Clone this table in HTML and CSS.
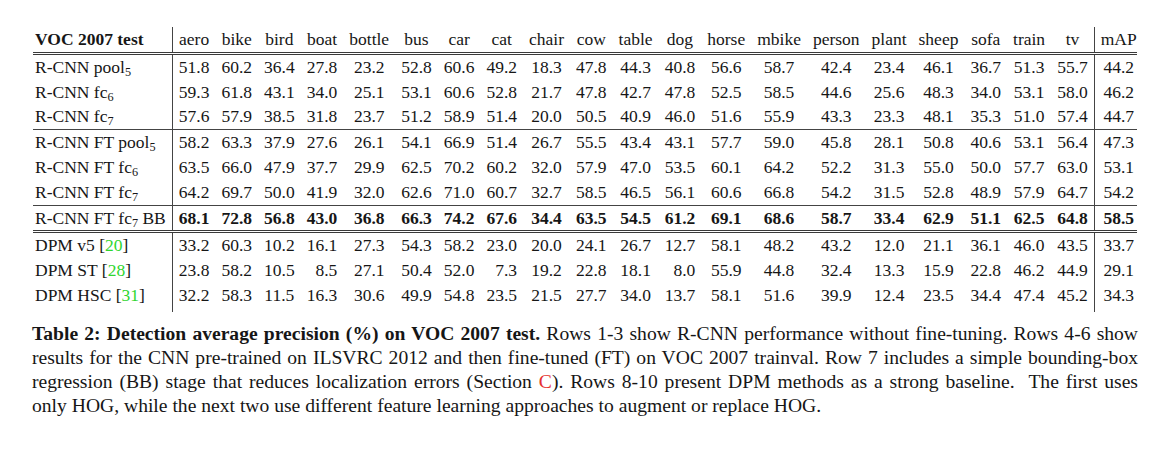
FILE: index.html
```html
<!DOCTYPE html>
<html>
<head>
<meta charset="utf-8">
<link rel="stylesheet" href="styles.css">
</head>
<body>
<div class="page">
<table class="voc">
<thead>
<tr class="dbl"><th class="lbl bold">VOC 2007 test</th><th>aero</th><th>bike</th><th>bird</th><th>boat</th><th>bottle</th><th>bus</th><th>car</th><th>cat</th><th>chair</th><th>cow</th><th>table</th><th>dog</th><th>horse</th><th>mbike</th><th>person</th><th>plant</th><th>sheep</th><th>sofa</th><th>train</th><th>tv</th><th class="map">mAP</th></tr>
</thead>
<tbody>
<tr><td class="lbl">R-CNN pool<sub>5</sub></td><td>51.8</td><td>60.2</td><td>36.4</td><td>27.8</td><td>23.2</td><td>52.8</td><td>60.6</td><td>49.2</td><td>18.3</td><td>47.8</td><td>44.3</td><td>40.8</td><td>56.6</td><td>58.7</td><td>42.4</td><td>23.4</td><td>46.1</td><td>36.7</td><td>51.3</td><td>55.7</td><td class="map">44.2</td></tr>
<tr><td class="lbl">R-CNN fc<sub>6</sub></td><td>59.3</td><td>61.8</td><td>43.1</td><td>34.0</td><td>25.1</td><td>53.1</td><td>60.6</td><td>52.8</td><td>21.7</td><td>47.8</td><td>42.7</td><td>47.8</td><td>52.5</td><td>58.5</td><td>44.6</td><td>25.6</td><td>48.3</td><td>34.0</td><td>53.1</td><td>58.0</td><td class="map">46.2</td></tr>
<tr class="sgl"><td class="lbl">R-CNN fc<sub>7</sub></td><td>57.6</td><td>57.9</td><td>38.5</td><td>31.8</td><td>23.7</td><td>51.2</td><td>58.9</td><td>51.4</td><td>20.0</td><td>50.5</td><td>40.9</td><td>46.0</td><td>51.6</td><td>55.9</td><td>43.3</td><td>23.3</td><td>48.1</td><td>35.3</td><td>51.0</td><td>57.4</td><td class="map">44.7</td></tr>
<tr><td class="lbl">R-CNN FT pool<sub>5</sub></td><td>58.2</td><td>63.3</td><td>37.9</td><td>27.6</td><td>26.1</td><td>54.1</td><td>66.9</td><td>51.4</td><td>26.7</td><td>55.5</td><td>43.4</td><td>43.1</td><td>57.7</td><td>59.0</td><td>45.8</td><td>28.1</td><td>50.8</td><td>40.6</td><td>53.1</td><td>56.4</td><td class="map">47.3</td></tr>
<tr><td class="lbl">R-CNN FT fc<sub>6</sub></td><td>63.5</td><td>66.0</td><td>47.9</td><td>37.7</td><td>29.9</td><td>62.5</td><td>70.2</td><td>60.2</td><td>32.0</td><td>57.9</td><td>47.0</td><td>53.5</td><td>60.1</td><td>64.2</td><td>52.2</td><td>31.3</td><td>55.0</td><td>50.0</td><td>57.7</td><td>63.0</td><td class="map">53.1</td></tr>
<tr class="sgl"><td class="lbl">R-CNN FT fc<sub>7</sub></td><td>64.2</td><td>69.7</td><td>50.0</td><td>41.9</td><td>32.0</td><td>62.6</td><td>71.0</td><td>60.7</td><td>32.7</td><td>58.5</td><td>46.5</td><td>56.1</td><td>60.6</td><td>66.8</td><td>54.2</td><td>31.5</td><td>52.8</td><td>48.9</td><td>57.9</td><td>64.7</td><td class="map">54.2</td></tr>
<tr class="dbl best"><td class="lbl">R-CNN FT fc<sub>7</sub> BB</td><td>68.1</td><td>72.8</td><td>56.8</td><td>43.0</td><td>36.8</td><td>66.3</td><td>74.2</td><td>67.6</td><td>34.4</td><td>63.5</td><td>54.5</td><td>61.2</td><td>69.1</td><td>68.6</td><td>58.7</td><td>33.4</td><td>62.9</td><td>51.1</td><td>62.5</td><td>64.8</td><td class="map">58.5</td></tr>
<tr><td class="lbl">DPM v5 [<span class="cite">20</span>]</td><td>33.2</td><td>60.3</td><td>10.2</td><td>16.1</td><td>27.3</td><td>54.3</td><td>58.2</td><td>23.0</td><td>20.0</td><td>24.1</td><td>26.7</td><td>12.7</td><td>58.1</td><td>48.2</td><td>43.2</td><td>12.0</td><td>21.1</td><td>36.1</td><td>46.0</td><td>43.5</td><td class="map">33.7</td></tr>
<tr><td class="lbl">DPM ST [<span class="cite">28</span>]</td><td>23.8</td><td>58.2</td><td>10.5</td><td><span class="ph">0</span>8.5</td><td>27.1</td><td>50.4</td><td>52.0</td><td><span class="ph">0</span>7.3</td><td>19.2</td><td>22.8</td><td>18.1</td><td><span class="ph">0</span>8.0</td><td>55.9</td><td>44.8</td><td>32.4</td><td>13.3</td><td>15.9</td><td>22.8</td><td>46.2</td><td>44.9</td><td class="map">29.1</td></tr>
<tr class="last"><td class="lbl">DPM HSC [<span class="cite">31</span>]</td><td>32.2</td><td>58.3</td><td>11.5</td><td>16.3</td><td>30.6</td><td>49.9</td><td>54.8</td><td>23.5</td><td>21.5</td><td>27.7</td><td>34.0</td><td>13.7</td><td>58.1</td><td>51.6</td><td>39.9</td><td>12.4</td><td>23.5</td><td>34.4</td><td>47.4</td><td>45.2</td><td class="map">34.3</td></tr>
</tbody>
</table>
<div class="caption">
<div class="line"><span class="bold">Table 2: Detection average precision (%) on VOC 2007 test.</span> Rows 1-3 show R-CNN performance without fine-tuning. Rows 4-6 show</div>
<div class="line">results for the CNN pre-trained on ILSVRC 2012 and then fine-tuned (FT) on VOC 2007 trainval. Row 7 includes a simple bounding-box</div>
<div class="line">regression (BB) stage that reduces localization errors (Section <span class="ref">C</span>). Rows 8-10 present DPM methods as a strong baseline. &nbsp;The first uses</div>
<div class="line lastline">only HOG, while the next two use different feature learning approaches to augment or replace HOG.</div>
</div>
</div>
</body>
</html>
```

FILE: styles.css
```css
html, body {
  margin: 0;
  padding: 0;
  background: #ffffff;
}

body {
  font-family: "Liberation Serif", "Times New Roman", serif;
  color: #161616;
  font-size: 17.5px;
}

.page {
  padding: 27px 0 0 33px;
}

.voc {
  border-collapse: collapse;
  border-spacing: 0;
}

.voc th,
.voc td {
  font-weight: normal;
  line-height: 24.8px;
  padding: 0 6px;
  text-align: center;
  white-space: nowrap;
}

.voc .lbl {
  text-align: left;
  padding-left: 2px;
  border-right: 1.5px solid #444;
}

.voc .map {
  padding-right: 0;
  border-left: 1.5px solid #444;
}

.voc .bold,
.caption .bold {
  font-weight: bold;
}

.voc tr.dbl > th,
.voc tr.dbl > td {
  border-bottom: 3px double #3a3a3a;
}

.voc tr.sgl > td {
  border-bottom: 1.3px solid #444;
}

.voc tr.best > td {
  font-weight: bold;
}

.voc tr.best > td.lbl {
  font-weight: normal;
}

.voc tr.last > td {
  padding-bottom: 4px;
}

.voc sub {
  font-size: 0.7em;
  vertical-align: -0.28em;
  line-height: 0;
}

.ph {
  visibility: hidden;
}

.cite {
  color: #2fd62f;
}

.ref {
  color: #e5312f;
}

.caption {
  width: 1106px;
  margin-top: 10px;
  margin-left: -1px;
  font-size: 19.6px;
  line-height: 24px;
}

.caption .line {
  text-align: justify;
  text-align-last: justify;
  white-space: nowrap;
  word-spacing: -1.5px;
}

.caption .line.lastline {
  text-align: left;
  text-align-last: left;
  word-spacing: 0;
}
```
